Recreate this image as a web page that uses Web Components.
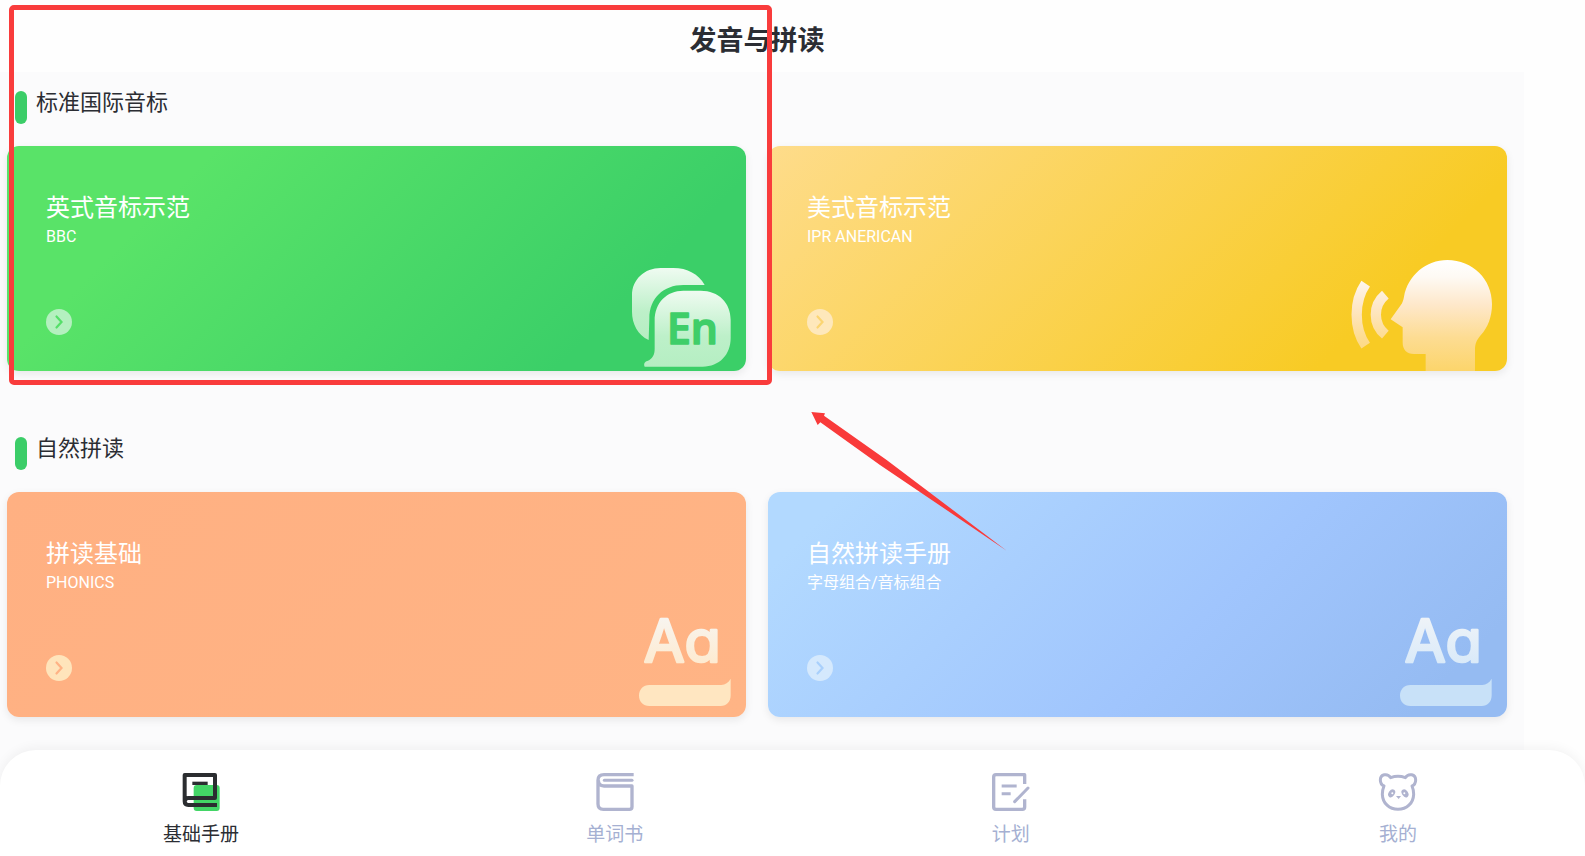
<!DOCTYPE html>
<html lang="zh-CN">
<head>
<meta charset="utf-8">
<meta name="viewport" content="width=device-width, initial-scale=1">
<title>发音与拼读</title>
<style>
  body {
    margin: 0;
    background: #fefefe;
    color: #2b2d33;
    font-family: Roboto, "Noto Sans CJK SC", sans-serif;
  }
</style>
</head>
<body>
<phonics-page>
  <page-header slot="header">发音与拼读</page-header>

  <lesson-section label="标准国际音标">
    <lesson-card tone="green" label="英式音标示范" note="BBC">
      <svg viewBox="-63 30 426 333" aria-hidden="true">
        <defs>
          <linearGradient id="bubble" x1="0" y1="0" x2="0" y2="1">
            <stop offset="0" stop-color="#effbf1"/>
            <stop offset=".6" stop-color="#bdf0c9"/>
            <stop offset="1" stop-color="#b5eec2"/>
          </linearGradient>
        </defs>
        <path fill="url(#bubble)" d="M116 270C84 255 66 222 66 185V136C66 88 104 54 152 54H190C232 54 266 72 284 105H220C160 105 118 145 118 205Z"/>
        <path fill="url(#bubble)" d="M104 350C100 342 104 335 112 333C128 326 134 314 134 296V212C134 158 170 122 220 122H272C326 122 362 158 362 210V264C362 314 328 350 278 350Z"/>
        <text x="171" y="281" font-family="Open Sans, sans-serif" font-size="128" font-weight="600" fill="#3fce69" stroke="#3fce69" stroke-width="5" stroke-linejoin="round">En</text>
      </svg>
    </lesson-card>
    <lesson-card tone="yellow" label="美式音标示范" note="IPR ANERICAN">
      <svg viewBox="60 60 426 333" aria-hidden="true">
        <defs>
          <linearGradient id="head" gradientUnits="userSpaceOnUse" x1="0" y1="60" x2="0" y2="393">
            <stop offset="0" stop-color="#fff"/>
            <stop offset=".15" stop-color="#fefaf4"/>
            <stop offset=".4" stop-color="#fee8cb"/>
            <stop offset=".7" stop-color="#fddc92"/>
            <stop offset="1" stop-color="#fcd56b"/>
          </linearGradient>
        </defs>
        <path fill="url(#head)" d="M352 60C428 60 486 118 486 192C486 230 474 262 452 286C440 300 435 312 435 330V393H287V342H252C230 342 218 328 218 308V262L182 238L212 196C218 188 220 180 222 170C234 106 288 60 352 60Z"/>
        <path fill="none" stroke="url(#head)" stroke-width="31" d="M166 164C128 196 128 252 166 284M107 131C71 184 71 264 107 317"/>
      </svg>
    </lesson-card>
  </lesson-section>

  <lesson-section label="自然拼读">
    <lesson-card tone="orange" label="拼读基础" note="PHONICS">
      <svg viewBox="-63 18 426 333" aria-hidden="true">
        <defs>
          <linearGradient id="cream" x1="0" y1="0" x2="0" y2="1">
            <stop offset=".2" stop-color="#f8f4ee"/>
            <stop offset="1" stop-color="#ffe8c8"/>
          </linearGradient>
        </defs>
        <text x="101" y="187" font-family="Inter, sans-serif" font-size="178" font-weight="400" fill="url(#cream)" stroke="url(#cream)" stroke-width="8" stroke-linejoin="round" style="font-feature-settings:'cv11'">Aa</text>
        <path fill="#ffe6c1" d="M118 255H334C346 254 355 248 362 236V286C362 306 350 318 332 318H118C99 318 87 304 87 287C87 269 99 255 118 255Z"/>
      </svg>
    </lesson-card>
    <lesson-card tone="blue" label="自然拼读手册" note="字母组合/音标组合">
      <svg viewBox="-63 18 426 333" aria-hidden="true">
        <defs>
          <linearGradient id="ice" x1="0" y1="0" x2="0" y2="1">
            <stop offset=".2" stop-color="#eef3f8"/>
            <stop offset="1" stop-color="#d3e7f9"/>
          </linearGradient>
        </defs>
        <text x="101" y="187" font-family="Inter, sans-serif" font-size="178" font-weight="400" fill="url(#ice)" stroke="url(#ice)" stroke-width="8" stroke-linejoin="round" style="font-feature-settings:'cv11'">Aa</text>
        <path fill="#c8e1f8" d="M118 255H334C346 254 355 248 362 236V286C362 306 350 318 332 318H118C99 318 87 304 87 287C87 269 99 255 118 255Z"/>
      </svg>
    </lesson-card>
  </lesson-section>

  <tab-bar slot="tabs">
    <tab-item label="基础手册" active>
      <svg viewBox="124 96 120 120" aria-hidden="true">
        <rect x="162" y="135" width="78" height="78" rx="9" fill="#43d566"/>
        <path fill="none" stroke="#2b2d30" stroke-width="12" stroke-linejoin="round" d="M232 195H146Q135 195 135 184V105H226V174H146Q136 174 136 184"/>
        <path stroke="#2b2d30" stroke-width="10" d="M158 130H204"/>
      </svg>
    </tab-item>
    <tab-item label="单词书">
      <svg viewBox="79 66 120 120" aria-hidden="true" fill="none" stroke="#b0b4cf">
        <path stroke-width="10" stroke-linejoin="round" d="M195 74H106Q88 74 88 91V162Q88 178 104 178H182Q190 178 190 170V108H106Q89 108 89 91"/>
        <path stroke-width="9" stroke-linecap="round" d="M107 91H190"/>
      </svg>
    </tab-item>
    <tab-item label="计划">
      <svg viewBox="65 66 120 120" aria-hidden="true" fill="none" stroke="#b0b4cf">
        <path stroke-width="10" stroke-linejoin="round" d="M166 102V74H80Q73 74 73 81V171Q73 178 80 178H159Q166 178 166 171V148"/>
        <path stroke-width="9" d="M97 108H142M97 131H124"/>
        <path stroke-width="9" stroke-linecap="round" d="M136 155L176 114"/>
      </svg>
    </tab-item>
    <tab-item label="我的">
      <svg viewBox="84 66 120 120" aria-hidden="true" fill="none" stroke="#b0b4cf">
        <path stroke-width="9" stroke-linejoin="round" d="M122 83C112 68 91 73 91 90C91 99 95 105 102 108C98 117 97 125 97 133C98 160 118 178 144 178C170 178 190 160 191 133C191 125 190 117 186 108C193 105 197 99 197 90C197 73 176 68 166 83C152 78 136 78 122 83Z"/>
        <g stroke="none" fill="#b0b4cf">
          <ellipse cx="125" cy="130" rx="9" ry="13" transform="rotate(35 125 130)"/>
          <ellipse cx="165" cy="130" rx="9" ry="13" transform="rotate(-35 165 130)"/>
          <path d="M138 138H153L146 147Z"/>
        </g>
        <circle cx="127" cy="130" r="3" fill="#fff" stroke="none"/>
        <circle cx="163" cy="130" r="3" fill="#fff" stroke="none"/>
      </svg>
    </tab-item>
  </tab-bar>

  <mark-box slot="marks"></mark-box>
  <mark-arrow slot="marks"></mark-arrow>
</phonics-page>

<script>
/**
 * Attaches an open shadow root to an element and fills it.
 */
function render (el, html) {
  el.attachShadow({ mode: 'open' }).innerHTML = html
}

/**
 * Page frame: header, scrolling content, tab bar and the marks on top.
 */
class PhonicsPage extends HTMLElement {
  constructor () {
    super()
    render(this, `
      <style>
        :host {
          position: relative;
          display: flex;
          flex-direction: column;
          min-height: 100vh;
        }
        main {
          flex: 1;
          display: flex;
          flex-direction: column;
          gap: 47px;
          margin-right: 61px;
          padding: 0 17px 69px 7px;
          background: #fbfbfc;
        }
      </style>
      <slot name="header"></slot>
      <main><slot></slot></main>
      <slot name="tabs"></slot>
      <slot name="marks"></slot>
    `)
  }
}

class PageHeader extends HTMLElement {
  constructor () {
    super()
    render(this, `
      <style>
        :host {
          display: block;
          padding: 25px 78px 15px 7px;
          text-align: center;
        }
        h1 {
          margin: 0;
          font-size: 27px;
          line-height: 32px;
          font-weight: 700;
        }
      </style>
      <h1><slot></slot></h1>
    `)
  }
}

/**
 * A labelled row of cards.
 * @property {string} - 'label' - heading of the section.
 */
class LessonSection extends HTMLElement {
  constructor () {
    super()
    render(this, `
      <style>
        :host {
          display: block;
          padding-top: 19px;
        }
        header {
          display: flex;
          gap: 9px;
          margin-bottom: 22px;
          padding-left: 8px;
        }
        header::before {
          content: "";
          width: 12px;
          height: 33px;
          border-radius: 6px;
          background: #3bcd68;
        }
        h2 {
          margin: 0;
          font-size: 22px;
          line-height: 24px;
          font-weight: 400;
        }
        .cards {
          display: grid;
          grid-template-columns: 1fr 1fr;
          gap: 22px;
        }
      </style>
      <header><h2></h2></header>
      <div class="cards"><slot></slot></div>
    `)
  }

  connectedCallback () {
    this.shadowRoot.querySelector('h2').textContent = this.getAttribute('label')
  }
}

/**
 * @property {string} - 'label' - title of the lesson.
 * @property {string} - 'note' - small line under the title.
 * @property {string} - 'tone' - green, yellow, orange or blue.
 */
class LessonCard extends HTMLElement {
  constructor () {
    super()
    render(this, `
      <style>
        :host { display: block; }
        :host([tone="green"]) {
          --fill: linear-gradient(135deg, #59e368 22%, #3bcf68 80%);
          --badge: #b4f0bf;
          --chevron: #55df69;
        }
        :host([tone="yellow"]) {
          --fill: linear-gradient(135deg, #fedc8b 0%, #f8cb24 80%);
          --badge: #fee8bb;
          --chevron: #fbd572;
        }
        :host([tone="orange"]) {
          --fill: linear-gradient(135deg, #ffb082, #ffb485);
          --badge: #ffe4bb;
          --chevron: #ffb285;
        }
        :host([tone="blue"]) {
          --fill: linear-gradient(135deg, #b2d9ff 8%, #a0c5fd 58%, #95bbf2 90%);
          --badge: #d5e9fd;
          --chevron: #a9d0fc;
        }
        a {
          display: flex;
          justify-content: space-between;
          align-items: flex-end;
          padding-right: 15px;
          border-radius: 12px;
          background: var(--fill);
          box-shadow: 0 3px 8px rgba(0, 0, 0, .08);
          color: #fff;
          text-decoration: none;
        }
        .text { padding: 45px 0 36px 39px; }
        h3, p { margin: 0; font-weight: 400; }
        h3 { font-size: 24px; line-height: 34px; }
        p { font-size: 16px; line-height: 24px; }
        .go {
          display: block;
          width: 26px;
          height: 26px;
          margin-top: 60px;
        }
        ::slotted(svg) {
          display: block;
          width: 142px;
          height: 111px;
        }
      </style>
      <a href="#">
        <div class="text">
          <h3></h3>
          <p></p>
          <svg class="go" viewBox="0 0 26 26" aria-hidden="true">
            <circle cx="13" cy="13" r="13" fill="var(--badge)"/>
            <path d="M10.500 7.500L15.500 13L10.500 18.500" fill="none" stroke="var(--chevron)" stroke-width="2.200" stroke-linecap="round"/>
          </svg>
        </div>
        <slot></slot>
      </a>
    `)
  }

  connectedCallback () {
    this.shadowRoot.querySelector('h3').textContent = this.getAttribute('label')
    this.shadowRoot.querySelector('p').textContent = this.getAttribute('note')
  }
}

class TabBar extends HTMLElement {
  constructor () {
    super()
    render(this, `
      <style>
        :host {
          position: relative;
          display: block;
          margin-top: -36px;
          border-radius: 36px 36px 0 0;
          background: #fff;
          box-shadow: 0 -2px 12px rgba(0, 0, 0, .05);
        }
        nav {
          display: flex;
          justify-content: space-between;
          padding: 22px 167px 9px 163px;
        }
      </style>
      <nav><slot></slot></nav>
    `)
  }
}

/**
 * @property {string} - 'label' - text under the icon.
 * @property {bool} - 'active' - whether this tab is the current one.
 */
class TabItem extends HTMLElement {
  constructor () {
    super()
    render(this, `
      <style>
        :host {
          display: block;
          color: #a5b0d2;
        }
        :host([active]) { color: #2b2d33; }
        a {
          display: flex;
          flex-direction: column;
          align-items: center;
          gap: 11px;
          color: inherit;
          font-size: 19px;
          line-height: 24px;
          text-decoration: none;
        }
        ::slotted(svg) {
          display: block;
          width: 40px;
          height: 40px;
        }
      </style>
      <a href="#"><slot></slot><span></span></a>
    `)
  }

  connectedCallback () {
    this.shadowRoot.querySelector('span').textContent = this.getAttribute('label')
  }
}

// Red frame round the first section.
class MarkBox extends HTMLElement {
  constructor () {
    super()
    render(this, `
      <style>
        :host {
          position: absolute;
          top: 5px;
          left: 9px;
          box-sizing: border-box;
          width: 763px;
          height: 380px;
          border: 5px solid #f93c3c;
          border-radius: 5px;
          pointer-events: none;
        }
      </style>
    `)
  }
}

// Red arrow that points at the frame.
class MarkArrow extends HTMLElement {
  constructor () {
    super()
    render(this, `
      <style>
        :host {
          position: absolute;
          top: 412px;
          left: 811px;
          pointer-events: none;
        }
        svg { display: block; }
      </style>
      <svg width="196" height="140" viewBox="183 66 588 420" aria-hidden="true">
        <path fill="#f93a3a" d="M184 66L225 70L222 77L410 210L770 482L390 225L211 97L203 105Z"/>
      </svg>
    `)
  }
}

customElements.define('phonics-page', PhonicsPage)
customElements.define('page-header', PageHeader)
customElements.define('lesson-section', LessonSection)
customElements.define('lesson-card', LessonCard)
customElements.define('tab-bar', TabBar)
customElements.define('tab-item', TabItem)
customElements.define('mark-box', MarkBox)
customElements.define('mark-arrow', MarkArrow)
</script>
</body>
</html>
